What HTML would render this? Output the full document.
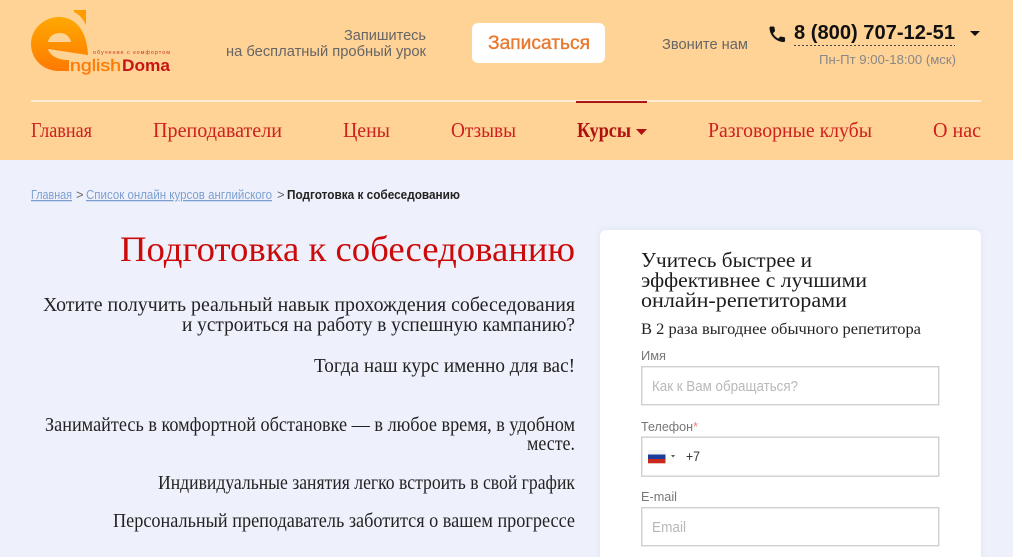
<!DOCTYPE html>
<html lang="ru">
<head>
<meta charset="utf-8">
<title>Подготовка к собеседованию</title>
<style>
html,body{margin:0;padding:0;width:1013px;height:557px;overflow:hidden;background:#eef1fb}
svg{display:block}
.s{font-family:"Liberation Serif","DejaVu Serif",serif}
.a{font-family:"Liberation Sans","DejaVu Sans",sans-serif}
</style>
</head>
<body>
<svg xmlns="http://www.w3.org/2000/svg" width="1013" height="557" viewBox="0 0 1013 557">
<defs>
<linearGradient id="g" x1="0" y1="0" x2="0" y2="1"><stop offset="0" stop-color="#ffa800"/><stop offset="1" stop-color="#ff7a00"/></linearGradient>
<filter id="sh" x="-5%" y="-5%" width="110%" height="110%"><feDropShadow dx="0" dy="0" stdDeviation="3" flood-color="#8090c0" flood-opacity=".18"/></filter>
</defs>
<rect width="1013" height="557" fill="#eef1fb"/>
<rect width="1013" height="160" fill="#ffd296"/>

<!-- logo -->
<path fill="url(#g)" fill-rule="evenodd" d="M69 71 L59 71 C43 71 31 59 31 44 C31 29 44 17 59 17 C75 17 87 30 88 55 L48 49 C50 56 58 60 69 60 Z M48 42 C49 36 54 33 60 33 C66 33 70 37 71 42 Z"/>
<path fill="#ff9c00" d="M74 10 H86 V25 C83 19 79 14 74 12 Z"/>
<text class="a" x="70" y="71" font-size="17" fill="#ff7a00" stroke="#ff7a00" stroke-width=".3" textLength="51" lengthAdjust="spacingAndGlyphs">nglish</text>
<text class="a" x="122" y="71" font-size="17" font-weight="700" fill="#c81414" textLength="48" lengthAdjust="spacingAndGlyphs">Doma</text>
<text class="a" x="93" y="54" font-size="5.5" fill="#c8382a" textLength="77">обучение с комфортом</text>

<!-- top -->
<g class="a" font-size="15" fill="#666">
<text x="344" y="40" textLength="82" lengthAdjust="spacingAndGlyphs">Запишитесь</text>
<text x="226" y="56" textLength="200" lengthAdjust="spacingAndGlyphs">на бесплатный пробный урок</text>
<text x="662" y="49" textLength="86" lengthAdjust="spacingAndGlyphs" font-size="14.5">Звоните нам</text>
</g>
<rect x="472" y="23" width="133" height="40" rx="6" fill="#fff"/>
<text class="a" x="488" y="49" font-size="19" fill="#e8792e" stroke="#e8792e" stroke-width=".35" textLength="102" lengthAdjust="spacingAndGlyphs">Записаться</text>
<path transform="translate(767.2 24.2) scale(.84)" fill="#111" stroke="#111" stroke-width=".5" d="M6.62 10.79c1.44 2.83 3.76 5.14 6.59 6.59l2.2-2.2c.27-.27.67-.36 1.02-.24 1.12.37 2.33.57 3.57.57.55 0 1 .45 1 1V20c0 .55-.45 1-1 1-9.39 0-17-7.61-17-17 0-.55.45-1 1-1h3.5c.55 0 1 .45 1 1 0 1.25.2 2.45.57 3.57.11.35.03.74-.25 1.02l-2.2 2.2z"/>
<text class="a" x="794" y="39" font-size="20" font-weight="700" fill="#111" textLength="161" lengthAdjust="spacingAndGlyphs">8 (800) 707-12-51</text>
<line x1="794" y1="45.5" x2="955" y2="45.5" stroke="#444" stroke-width="1" stroke-dasharray="2 2"/>
<path d="M970 31 H980 L975 36 Z" fill="#111"/>
<text class="a" x="819" y="64" font-size="13" fill="#888" textLength="137" lengthAdjust="spacingAndGlyphs">Пн-Пт 9:00-18:00 (мск)</text>

<!-- nav -->
<rect x="31" y="100" width="950" height="2" fill="#ffecd4"/>
<rect x="576" y="101" width="71" height="2" fill="#b01515"/>
<g class="s" font-size="21" fill="#cf2020">
<text x="31" y="137" textLength="61" lengthAdjust="spacingAndGlyphs">Главная</text>
<text x="153" y="137" textLength="129" lengthAdjust="spacingAndGlyphs">Преподаватели</text>
<text x="343" y="137" textLength="47" lengthAdjust="spacingAndGlyphs">Цены</text>
<text x="451" y="137" textLength="65" lengthAdjust="spacingAndGlyphs">Отзывы</text>
<text x="577" y="137" textLength="54" lengthAdjust="spacingAndGlyphs" font-weight="700" fill="#b01010">Курсы</text>
<text x="708" y="137" textLength="164" lengthAdjust="spacingAndGlyphs">Разговорные клубы</text>
<text x="933" y="137" textLength="48" lengthAdjust="spacingAndGlyphs">О нас</text>
</g>
<path d="M636 129 H647 L641.5 135 Z" fill="#b01010"/>

<!-- breadcrumbs -->
<g class="a" font-size="13">
<text x="31" y="199" fill="#7d9fcf" text-decoration="underline" textLength="41" lengthAdjust="spacingAndGlyphs">Главная</text>
<text x="76" y="199" fill="#666">&gt;</text>
<text x="86" y="199" fill="#7d9fcf" text-decoration="underline" textLength="186" lengthAdjust="spacingAndGlyphs">Список онлайн курсов английского</text>
<text x="277" y="199" fill="#666">&gt;</text>
<text x="287" y="199" fill="#222" font-weight="700" textLength="173" lengthAdjust="spacingAndGlyphs">Подготовка к собеседованию</text>
</g>

<!-- left column -->
<text class="s" x="120" y="261" font-size="36" fill="#cc0a0a" textLength="455" lengthAdjust="spacingAndGlyphs">Подготовка к собеседованию</text>
<g class="s" font-size="20.5" fill="#222">
<text x="43" y="311" textLength="532" lengthAdjust="spacingAndGlyphs">Хотите получить реальный навык прохождения собеседования</text>
<text x="182" y="331" textLength="393" lengthAdjust="spacingAndGlyphs">и устроиться на работу в успешную кампанию?</text>
<text x="314" y="372" textLength="261" lengthAdjust="spacingAndGlyphs">Тогда наш курс именно для вас!</text>
</g>
<g class="s" font-size="19.5" fill="#222">
<text x="45" y="431" textLength="530" lengthAdjust="spacingAndGlyphs">Занимайтесь в комфортной обстановке — в любое время, в удобном</text>
<text x="527" y="450" textLength="48" lengthAdjust="spacingAndGlyphs">месте.</text>
<text x="158" y="489" textLength="417" lengthAdjust="spacingAndGlyphs">Индивидуальные занятия легко встроить в свой график</text>
<text x="113" y="527" textLength="462" lengthAdjust="spacingAndGlyphs">Персональный преподаватель заботится о вашем прогрессе</text>
</g>

<!-- form card -->
<rect x="600" y="230" width="381" height="340" rx="6" fill="#fff" filter="url(#sh)"/>
<g class="s" font-size="21" fill="#1c1c1c">
<text x="641" y="267" textLength="171" lengthAdjust="spacingAndGlyphs">Учитесь быстрее и</text>
<text x="641" y="287" textLength="226" lengthAdjust="spacingAndGlyphs">эффективнее с лучшими</text>
<text x="641" y="307" textLength="206" lengthAdjust="spacingAndGlyphs">онлайн-репетиторами</text>
</g>
<text class="s" x="641" y="334" font-size="16" fill="#222" textLength="280" lengthAdjust="spacingAndGlyphs">В 2 раза выгоднее обычного репетитора</text>

<g class="a" font-size="13" fill="#777">
<text x="641" y="360" textLength="25" lengthAdjust="spacingAndGlyphs">Имя</text>
<text x="641" y="431" textLength="52" lengthAdjust="spacingAndGlyphs">Телефон</text>
<text x="693" y="431" fill="#f08080">*</text>
<text x="641" y="501" textLength="36" lengthAdjust="spacingAndGlyphs">E-mail</text>
</g>
<g fill="#fff" stroke="#cfcfcf" stroke-width="1.4">
<rect x="641.7" y="366.7" width="297" height="38"/>
<rect x="641.7" y="437.2" width="297" height="39"/>
<rect x="641.7" y="507.7" width="297" height="38"/>
</g>
<g class="a" font-size="14.5" fill="#b8b8b8">
<text x="652" y="391" textLength="146" lengthAdjust="spacingAndGlyphs">Как к Вам обращаться?</text>
<text x="652" y="532" textLength="34" lengthAdjust="spacingAndGlyphs">Email</text>
</g>
<rect x="648" y="450" width="17.5" height="4.5" fill="#f4f4f4"/>
<rect x="648" y="454.5" width="17.5" height="4.5" fill="#1c3d9c"/>
<rect x="648" y="459" width="17.5" height="4.3" fill="#c8281e"/>
<path d="M671 455 H675 L673 457.5 Z" fill="#555"/>
<text class="a" x="686" y="461" font-size="14" fill="#333" textLength="14" lengthAdjust="spacingAndGlyphs">+7</text>
</svg>
</body>
</html>
